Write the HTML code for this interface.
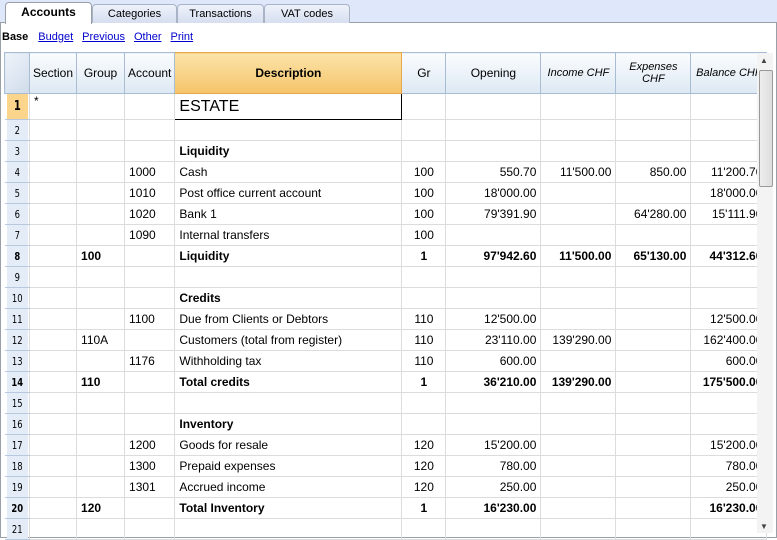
<!DOCTYPE html><html><head><style>
body{margin:0;width:777px;height:538px;overflow:hidden;background:#fff;font-family:"Liberation Sans",sans-serif;font-size:12px;position:relative}
.strip{position:absolute;left:0;top:0;width:777px;height:22px;background:#dfe7fa}
.tab{position:absolute;top:4px;height:18px;border:1px solid #a9b3c6;border-bottom:none;border-radius:4px 4px 0 0;background:linear-gradient(#eef2fb,#d6def0);text-align:center;line-height:18px;font-size:11px}
.panel{position:absolute;left:0;top:22px;width:775px;height:514px;border:1px solid #9aa0a8;border-top:1px solid #9aa0a8;background:#fff}
.tb{position:absolute;top:31px;font-size:11px}
.tb a{color:#00c;text-decoration:underline;margin-right:9px}
table{position:absolute;left:4px;top:52px;border-collapse:collapse;table-layout:fixed}
td{border:1px solid #dcdcdc;height:20px;padding:0 4px;white-space:nowrap;overflow:hidden;font-size:12px}
th{height:40px;background:linear-gradient(#fafcfe,#dde8f3);border:1px solid #a8bdd4;font-weight:normal;font-size:12px;padding:0 3px;overflow:hidden;white-space:nowrap}
th.d{background:linear-gradient(#fbe3a9,#f5c46a);border-color:#e7a84a;font-weight:bold}
th.i{font-style:italic;font-size:11px}
td.n{background:#e4ecf7;border:none;border-bottom:1px solid #b8c9dd;font-family:"DejaVu Sans Condensed","Liberation Sans Narrow",sans-serif;font-size:11px;text-align:center;padding:0;transform:scaleX(.85)}
.r{text-align:right}.c{text-align:center}.b{font-weight:bold}
.sb{position:absolute;left:757px;top:53px;width:16px;height:480px;background:#f3f3f3}
.th{position:absolute;left:759px;top:70px;width:12px;height:115px;border:1px solid #999;border-radius:2px;background:linear-gradient(90deg,#eee,#ddd)}
</style></head><body>
<div class="strip"></div>
<div class="panel"></div>
<div class="tab" style="left:5px;width:85px;top:2px;height:21px;background:#fff;font-weight:bold;font-size:12px;border-color:#9aa0a8">Accounts</div>
<div class="tab" style="left:92px;width:83px">Categories</div>
<div class="tab" style="left:177px;width:85px">Transactions</div>
<div class="tab" style="left:264px;width:84px">VAT codes</div>
<div class="tb" style="left:2px"><b style="margin-right:10px">Base</b><a>Budget</a><a>Previous</a><a>Other</a><a>Print</a></div>
<table>
<colgroup><col style="width:25px"><col style="width:37px"><col style="width:48px"><col style="width:49px"><col style="width:227px"><col style="width:44px"><col style="width:95px"><col style="width:75px"><col style="width:75px"><col style="width:76px"></colgroup>
<tr><th style="background:linear-gradient(135deg,#eef3fa,#cfdbea)"></th><th>Section</th><th>Group</th><th>Account</th><th class="d">Description</th><th>Gr</th><th>Opening</th><th class="i">Income CHF</th><th class="i">Expenses<br>CHF</th><th class="i">Balance CHF</th></tr>
<tr><td class="n b" style="background:#fbd58c;height:25px;font-size:13px">1</td><td style="vertical-align:top">*</td><td></td><td></td><td style="border:1px solid #000;font-size:16px">ESTATE</td><td></td><td></td><td></td><td></td><td></td></tr>
<tr><td class="n">2</td><td></td><td></td><td></td><td></td><td></td><td></td><td></td><td></td><td></td></tr>
<tr><td class="n">3</td><td></td><td></td><td></td><td class="b">Liquidity</td><td></td><td></td><td></td><td></td><td></td></tr>
<tr><td class="n">4</td><td></td><td></td><td>1000</td><td>Cash</td><td class="c">100</td><td class="r">550.70</td><td class="r">11'500.00</td><td class="r">850.00</td><td class="r">11'200.70</td></tr>
<tr><td class="n">5</td><td></td><td></td><td>1010</td><td>Post office current account</td><td class="c">100</td><td class="r">18'000.00</td><td></td><td></td><td class="r">18'000.00</td></tr>
<tr><td class="n">6</td><td></td><td></td><td>1020</td><td>Bank 1</td><td class="c">100</td><td class="r">79'391.90</td><td></td><td class="r">64'280.00</td><td class="r">15'111.90</td></tr>
<tr><td class="n">7</td><td></td><td></td><td>1090</td><td>Internal transfers</td><td class="c">100</td><td></td><td></td><td></td><td></td></tr>
<tr class="b"><td class="n">8</td><td></td><td>100</td><td></td><td>Liquidity</td><td class="c">1</td><td class="r">97'942.60</td><td class="r">11'500.00</td><td class="r">65'130.00</td><td class="r">44'312.60</td></tr>
<tr><td class="n">9</td><td></td><td></td><td></td><td></td><td></td><td></td><td></td><td></td><td></td></tr>
<tr><td class="n">10</td><td></td><td></td><td></td><td class="b">Credits</td><td></td><td></td><td></td><td></td><td></td></tr>
<tr><td class="n">11</td><td></td><td></td><td>1100</td><td>Due from Clients or Debtors</td><td class="c">110</td><td class="r">12'500.00</td><td></td><td></td><td class="r">12'500.00</td></tr>
<tr><td class="n">12</td><td></td><td>110A</td><td></td><td>Customers (total from register)</td><td class="c">110</td><td class="r">23'110.00</td><td class="r">139'290.00</td><td></td><td class="r">162'400.00</td></tr>
<tr><td class="n">13</td><td></td><td></td><td>1176</td><td>Withholding tax</td><td class="c">110</td><td class="r">600.00</td><td></td><td></td><td class="r">600.00</td></tr>
<tr class="b"><td class="n">14</td><td></td><td>110</td><td></td><td>Total credits</td><td class="c">1</td><td class="r">36'210.00</td><td class="r">139'290.00</td><td></td><td class="r">175'500.00</td></tr>
<tr><td class="n">15</td><td></td><td></td><td></td><td></td><td></td><td></td><td></td><td></td><td></td></tr>
<tr><td class="n">16</td><td></td><td></td><td></td><td class="b">Inventory</td><td></td><td></td><td></td><td></td><td></td></tr>
<tr><td class="n">17</td><td></td><td></td><td>1200</td><td>Goods for resale</td><td class="c">120</td><td class="r">15'200.00</td><td></td><td></td><td class="r">15'200.00</td></tr>
<tr><td class="n">18</td><td></td><td></td><td>1300</td><td>Prepaid expenses</td><td class="c">120</td><td class="r">780.00</td><td></td><td></td><td class="r">780.00</td></tr>
<tr><td class="n">19</td><td></td><td></td><td>1301</td><td>Accrued income</td><td class="c">120</td><td class="r">250.00</td><td></td><td></td><td class="r">250.00</td></tr>
<tr class="b"><td class="n">20</td><td></td><td>120</td><td></td><td>Total Inventory</td><td class="c">1</td><td class="r">16'230.00</td><td></td><td></td><td class="r">16'230.00</td></tr>
<tr><td class="n">21</td><td></td><td></td><td></td><td></td><td></td><td></td><td></td><td></td><td></td></tr>
</table>
<div class="sb"></div><div class="th"></div>
<div style="position:absolute;left:760px;top:56px;font-size:8px;color:#444">▲</div>
<div style="position:absolute;left:760px;top:522px;font-size:8px;color:#444">▼</div>
</body></html>
